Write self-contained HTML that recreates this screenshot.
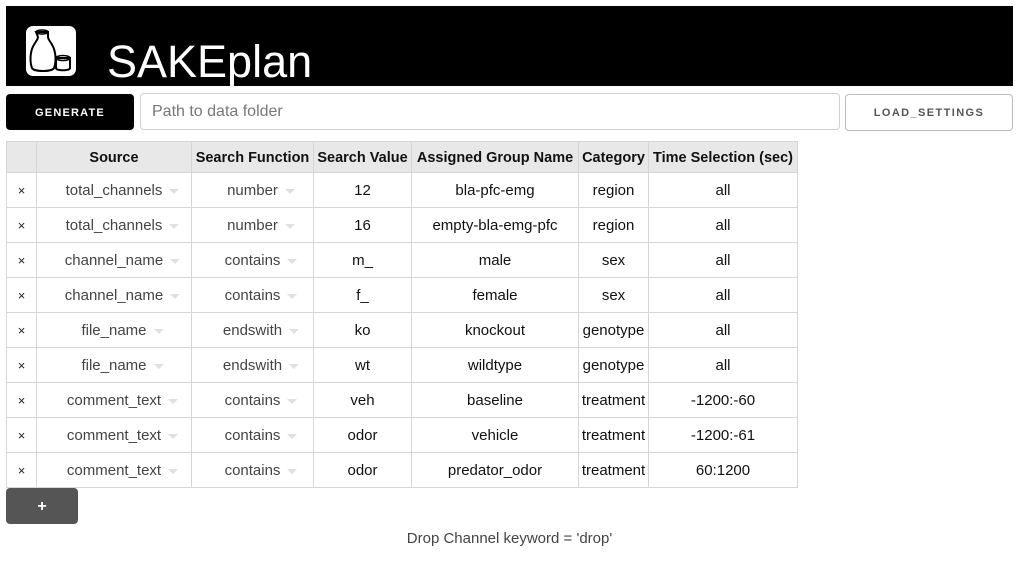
<!DOCTYPE html>
<html><head><style>
body{margin:0;background:#fff;font-family:"Liberation Sans",Arial,sans-serif;width:1019px;height:561px;overflow:hidden;position:relative}
.hdr{position:absolute;left:6px;top:6px;width:1007px;height:80px;background:#000}
.logo{position:absolute;left:20px;top:20px;width:50px;height:50px;background:#fff;border-radius:7px}
.title{position:absolute;left:101px;top:31px;color:#fff;font-size:45px;line-height:50px}
.gen{position:absolute;left:6px;top:94px;width:128px;height:36px;background:#000;border-radius:4px;color:#fff;font-size:11px;font-weight:bold;letter-spacing:1.2px;text-align:center;line-height:38px}
.inp{position:absolute;left:140px;top:93px;border:1px solid #d1d1d1;border-radius:4px;color:#777;font-size:16px;line-height:36px;padding-left:11px;box-sizing:border-box;width:700px;height:37px}
.load{position:absolute;left:845px;top:94px;width:168px;height:37px;border:1px solid #bbb;border-radius:4px;box-sizing:border-box;color:#555;font-size:11px;font-weight:bold;letter-spacing:1.4px;text-align:center;line-height:37px}
table{position:absolute;left:6px;top:141px;border-collapse:collapse;font-size:15px;table-layout:fixed}
td,th{border:1px solid #d6d6d6;text-align:center;padding:0;white-space:nowrap;overflow:hidden;box-sizing:border-box}
th{background:#e8e8e8;height:31px;font-size:14.5px;color:#111;padding-top:1px}
td{height:35px;color:#111;padding-top:1px}
td.x{font-size:13px;color:#222}
td.d{color:#444}
.d b{font-weight:normal;position:relative}
.d span{position:absolute;right:-17px;top:7px;width:0;height:0;border-left:5px solid transparent;border-right:5px solid transparent;border-top:5px solid #e0e0e0}
.plus{position:absolute;left:6px;top:488px;width:72px;height:36px;background:#555;border-radius:4px;color:#fff;font-weight:bold;font-size:16px;text-align:center;line-height:38px}
.drop{position:absolute;left:0;width:1019px;top:530px;text-align:center;color:#444;font-size:15px}
</style></head><body>
<div class="hdr">
<div class="logo"><svg width="50" height="50" viewBox="0 0 50 50"><path d="M10 6 h12 v5 c0 3 4 6 6 12 c2 6 2 14 0 19 c-2 4 -20 4 -22 0 c-2 -5 -2 -13 0 -19 c2 -6 6 -9 6 -12 z" fill="none" stroke="#000" stroke-width="2"/><ellipse cx="16" cy="6" rx="6" ry="2" fill="none" stroke="#000" stroke-width="1.5"/><path d="M30 32 h14 v10 c0 3 -14 3 -14 0 z" fill="none" stroke="#000" stroke-width="2"/><ellipse cx="37" cy="32" rx="7" ry="2.5" fill="none" stroke="#000" stroke-width="1.5"/></svg></div>
<div class="title">SAKEplan</div>
</div>
<div class="gen">GENERATE</div>
<div class="inp">Path to data folder</div>
<div class="load">LOAD_SETTINGS</div>
<table>
<colgroup><col style="width:30px"><col style="width:155px"><col style="width:122px"><col style="width:98px"><col style="width:167px"><col style="width:70px"><col style="width:149px"></colgroup>
<tr><th></th><th>Source</th><th>Search Function</th><th>Search Value</th><th>Assigned Group Name</th><th>Category</th><th>Time Selection (sec)</th></tr>
<tr><td class="x">×</td><td class="d"><b>total_channels<span></span></b></td><td class="d"><b>number<span></span></b></td><td>12</td><td>bla-pfc-emg</td><td>region</td><td>all</td></tr>
<tr><td class="x">×</td><td class="d"><b>total_channels<span></span></b></td><td class="d"><b>number<span></span></b></td><td>16</td><td>empty-bla-emg-pfc</td><td>region</td><td>all</td></tr>
<tr><td class="x">×</td><td class="d"><b>channel_name<span></span></b></td><td class="d"><b>contains<span></span></b></td><td>m_</td><td>male</td><td>sex</td><td>all</td></tr>
<tr><td class="x">×</td><td class="d"><b>channel_name<span></span></b></td><td class="d"><b>contains<span></span></b></td><td>f_</td><td>female</td><td>sex</td><td>all</td></tr>
<tr><td class="x">×</td><td class="d"><b>file_name<span></span></b></td><td class="d"><b>endswith<span></span></b></td><td>ko</td><td>knockout</td><td>genotype</td><td>all</td></tr>
<tr><td class="x">×</td><td class="d"><b>file_name<span></span></b></td><td class="d"><b>endswith<span></span></b></td><td>wt</td><td>wildtype</td><td>genotype</td><td>all</td></tr>
<tr><td class="x">×</td><td class="d"><b>comment_text<span></span></b></td><td class="d"><b>contains<span></span></b></td><td>veh</td><td>baseline</td><td>treatment</td><td>-1200:-60</td></tr>
<tr><td class="x">×</td><td class="d"><b>comment_text<span></span></b></td><td class="d"><b>contains<span></span></b></td><td>odor</td><td>vehicle</td><td>treatment</td><td>-1200:-61</td></tr>
<tr><td class="x">×</td><td class="d"><b>comment_text<span></span></b></td><td class="d"><b>contains<span></span></b></td><td>odor</td><td>predator_odor</td><td>treatment</td><td>60:1200</td></tr>
</table>
<div class="plus">+</div>
<div class="drop">Drop Channel keyword = 'drop'</div>
</body></html>
